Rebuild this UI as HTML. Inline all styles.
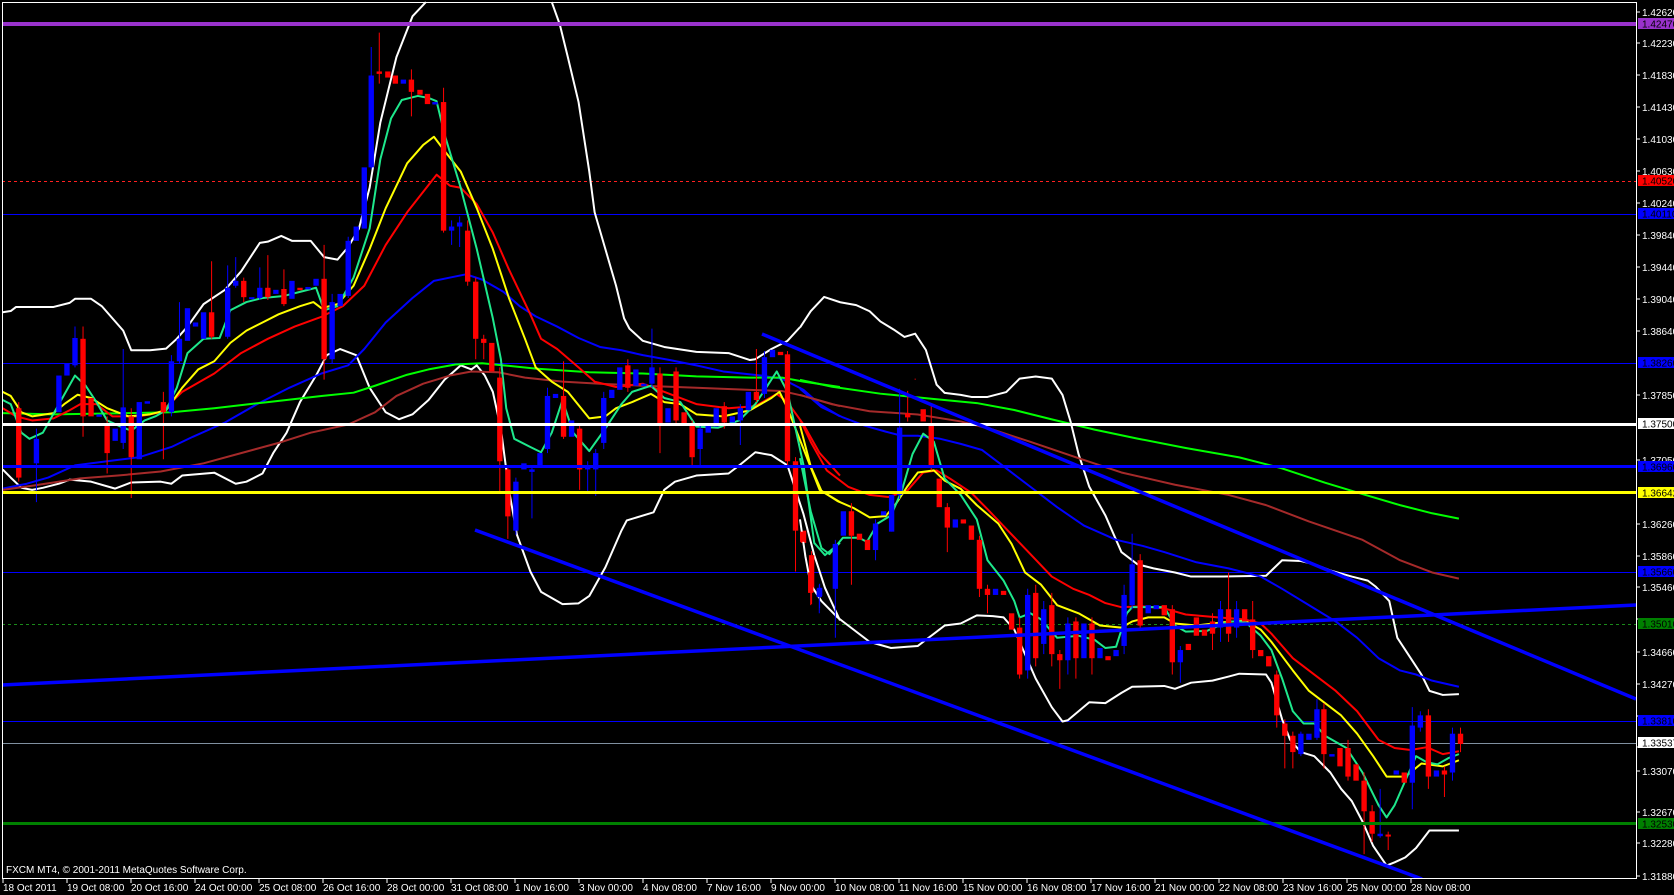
<!DOCTYPE html>
<html><head><meta charset="utf-8"><style>
html,body{margin:0;padding:0;background:#000;}
svg{display:block}
text{font-family:"Liberation Sans",sans-serif;font-size:10px;}
</style></head><body>
<svg width="1674" height="895" viewBox="0 0 1674 895" xmlns="http://www.w3.org/2000/svg">
<rect width="1674" height="895" fill="#000"/>
<line x1="2" y1="181.5" x2="1636" y2="181.5" stroke="#ff2020" stroke-dasharray="3,3"/>
<line x1="2" y1="214.5" x2="1636" y2="214.5" stroke="#0000ff"/>
<line x1="2" y1="363.5" x2="1636" y2="363.5" stroke="#0000ff"/>
<line x1="2" y1="572.5" x2="1636" y2="572.5" stroke="#0000ff"/>
<line x1="2" y1="624.5" x2="1636" y2="624.5" stroke="#1a8a1a" stroke-dasharray="3,3"/>
<line x1="2" y1="721.5" x2="1636" y2="721.5" stroke="#0000ff"/>
<line x1="2" y1="743.5" x2="1636" y2="743.5" stroke="#8090a0"/>

<g fill="none" stroke-linejoin="round">
<g transform="scale(0.5357,0.4082)">
<polyline vector-effect="non-scaling-stroke" stroke-width="2" stroke="#fff" points="5,765 20,762 30,752 100,752 130,742 140,732 170,732 190,750 230,810 245,858 280,858 310,854 330,830 350,800 380,745 420,710 450,665 485,595 500,592 525,578 545,590 580,590 605,630 630,636 650,605 670,560 690,460 710,300 740,140 770,40 795,5"/>
<polyline vector-effect="non-scaling-stroke" stroke-width="2" stroke="#fff" points="1030,5 1045,60 1060,140 1080,250 1100,420 1110,520 1130,610 1150,700 1165,780 1175,805 1200,835 1240,850 1300,862 1360,865 1400,882 1410,880 1440,855 1470,835 1493,802"/>
<polyline vector-effect="non-scaling-stroke" stroke-width="2" stroke="#fff" points="5,1150 20,1170 40,1195 60,1200 80,1195 110,1185 130,1175 170,1180 215,1197 245,1182 300,1180 320,1185 340,1165 400,1158 440,1185 460,1180 490,1160 510,1110 535,1060 560,985 590,920 610,870 635,855 665,870 690,950 720,1010 745,1027 770,1015 800,980 830,930 860,895 880,905 890,895 905,920 920,960 935,1050 950,1200 965,1310 990,1400 1010,1450 1050,1480 1080,1478 1100,1460 1130,1390 1160,1300 1170,1275 1220,1255 1240,1200 1260,1180 1300,1165 1360,1160 1380,1140 1410,1108 1440,1115 1470,1140 1480,1180 1500,1260 1520,1360 1540,1440 1568,1520"/>
<polyline vector-effect="non-scaling-stroke" stroke-width="2" stroke="#0000ff" points="5,1197 50,1185 90,1170 140,1140 200,1130 260,1120 320,1095 360,1070 420,1035 480,990 540,950 600,915 650,895 680,855 720,790 770,730 810,688 840,680 870,672 900,685 940,715 970,750 1000,775 1040,800 1080,828 1120,850 1160,858 1200,870 1250,882 1300,895 1350,910 1420,920 1460,928 1500,955 1530,990 1568,1020"/>
<polyline vector-effect="non-scaling-stroke" stroke-width="2" stroke="#00ff00" points="5,1012 100,1015 200,1013 320,1010 400,1000 500,985 600,970 660,962 700,945 760,918 800,905 850,893 900,890 940,895 1000,903 1100,912 1200,915 1300,922 1400,925 1460,925 1500,935 1568,948"/>
<polyline vector-effect="non-scaling-stroke" stroke-width="2" stroke="#a52a2a" points="5,1200 60,1190 150,1172 220,1165 300,1155 380,1135 450,1110 520,1085 580,1060 650,1040 700,1010 740,970 790,940 840,920 880,910 930,912 980,925 1050,935 1120,940 1200,945 1300,950 1400,955 1460,958 1500,970 1568,995"/>
<polyline vector-effect="non-scaling-stroke" stroke-width="2" stroke="#ff0000" points="5,1000 30,1020 60,1030 100,1025 130,1005 150,990 180,990 210,1020 260,1020 300,1010 340,960 400,915 450,865 500,830 550,800 600,776 640,750 680,700 720,600 760,520 815,428 840,455 860,460 890,500 920,570 950,660 990,770 1010,830 1040,855 1080,900 1110,935 1150,948 1200,940 1260,970 1300,990 1360,1000 1410,995 1450,965 1470,985 1500,1040 1530,1110 1568,1165"/>
<polyline vector-effect="non-scaling-stroke" stroke-width="2" stroke="#ffff00" points="5,960 20,970 40,1010 60,1020 100,1012 120,990 145,967 170,975 200,1000 240,1020 280,1015 310,1005 340,950 370,905 400,885 430,840 460,810 490,790 520,770 560,750 585,740 600,755 630,745 660,700 690,610 720,510 760,400 790,355 810,335 830,370 860,420 890,510 920,610 950,730 980,830 1000,900 1030,935 1060,960 1100,1025 1130,1020 1150,1000 1180,985 1215,965 1240,985 1270,990 1300,1015 1350,1020 1400,1005 1440,975 1455,960 1470,1000 1500,1100 1530,1200 1568,1230"/>
<polyline vector-effect="non-scaling-stroke" stroke-width="2" stroke="#1ee88c" points="5,980 20,990 40,1060 55,1075 80,1060 110,990 140,920 160,945 180,985 200,1030 225,1045 245,1055 270,1030 290,1020 310,1005 330,950 350,865 380,830 410,828 430,760 460,740 490,730 530,725 560,715 590,705 605,760 630,750 660,680 690,560 710,390 730,290 750,245 780,235 800,240 815,248 830,330 860,460 890,610 920,780 935,880 945,1000 960,1075 990,1095 1010,1108 1030,1060 1050,980 1070,1060 1100,1105 1130,1050 1160,990 1180,960 1215,945 1240,975 1270,985 1300,1045 1340,1048 1380,1030 1410,990 1440,930 1450,910 1470,960 1500,1140 1520,1330 1540,1360 1568,1330"/>
<path vector-effect="non-scaling-stroke" stroke="#ff0000" d="M35 985V1180M155 800V1070M200 1020V1160M245 1000V1220M305 960V1125M395 640V830M455 680V740M500 625V735M530 660V750M605 600V930M708 80V205M768 170V285M828 215V570M873 540V700M888 680V880M903 820V880M933 900V1210M948 1140V1320M1052 885V1075M1082 1040V1200M1172 880V960M1232 900V1110M1262 900V1040M1292 1030V1140M1352 985V1050M1412 855V985M1470 860V1140M1485 1120V1400M1515 1350V1480"/>
<path vector-effect="non-scaling-stroke" stroke="#0000ff" d="M68 1050V1230M140 800V900M230 855V1100M320 870V1020M335 740V890M425 650V830M440 630V705M485 655V735M620 720V890M650 580V730M693 115V415M843 540V600M858 530V605M963 1170V1310M993 1140V1270M1022 950V1110M1097 1130V1210M1112 1100V1215M1127 960V1100M1217 805V950M1307 1040V1140M1382 990V1090M1427 860V975M1530 1430V1490"/>
<g fill="#ff0000" stroke="none">
<rect x="30" y="1000" width="10" height="170"/><rect x="150" y="830" width="10" height="190"/><rect x="165" y="975" width="10" height="45"/><rect x="195" y="1040" width="10" height="70"/><rect x="240" y="1020" width="10" height="100"/><rect x="300" y="985" width="10" height="25"/><rect x="390" y="765" width="10" height="60"/><rect x="450" y="688" width="10" height="40"/><rect x="495" y="705" width="10" height="23"/><rect x="525" y="708" width="10" height="37"/><rect x="555" y="705" width="10" height="6"/><rect x="600" y="683" width="10" height="197"/><rect x="703" y="175" width="10" height="6"/><rect x="719" y="175" width="10" height="15"/><rect x="733" y="185" width="10" height="20"/><rect x="763" y="195" width="10" height="30"/><rect x="779" y="220" width="10" height="12"/><rect x="793" y="230" width="10" height="25"/><rect x="823" y="250" width="10" height="315"/><rect x="868" y="565" width="10" height="125"/><rect x="883" y="690" width="10" height="140"/><rect x="898" y="830" width="10" height="10"/><rect x="913" y="840" width="10" height="70"/><rect x="928" y="925" width="10" height="205"/><rect x="943" y="1150" width="10" height="115"/><rect x="1047" y="970" width="10" height="100"/><rect x="1077" y="1050" width="10" height="100"/><rect x="1167" y="895" width="10" height="55"/><rect x="1227" y="915" width="10" height="125"/><rect x="1257" y="910" width="10" height="120"/><rect x="1272" y="1010" width="10" height="30"/><rect x="1287" y="1040" width="10" height="80"/><rect x="1347" y="995" width="10" height="40"/><rect x="1407" y="960" width="10" height="20"/><rect x="1452" y="862" width="10" height="8"/><rect x="1465" y="868" width="10" height="262"/><rect x="1480" y="1130" width="10" height="170"/><rect x="1495" y="1300" width="10" height="30"/><rect x="1510" y="1360" width="10" height="90"/>
</g>
<g fill="#0000ff" stroke="none">
<rect x="63" y="1075" width="10" height="60"/><rect x="105" y="920" width="10" height="90"/><rect x="120" y="890" width="10" height="30"/><rect x="135" y="828" width="10" height="67"/><rect x="180" y="1015" width="10" height="6"/><rect x="210" y="1050" width="10" height="30"/><rect x="225" y="998" width="10" height="87"/><rect x="255" y="985" width="10" height="140"/><rect x="270" y="983" width="10" height="6"/><rect x="315" y="885" width="10" height="125"/><rect x="330" y="830" width="10" height="55"/><rect x="345" y="755" width="10" height="80"/><rect x="360" y="790" width="10" height="10"/><rect x="375" y="765" width="10" height="65"/><rect x="420" y="705" width="10" height="120"/><rect x="435" y="688" width="10" height="12"/><rect x="465" y="728" width="10" height="5"/><rect x="480" y="705" width="10" height="25"/><rect x="510" y="710" width="10" height="10"/><rect x="540" y="688" width="10" height="44"/><rect x="570" y="703" width="10" height="6"/><rect x="585" y="683" width="10" height="17"/><rect x="615" y="740" width="10" height="140"/><rect x="630" y="720" width="10" height="30"/><rect x="645" y="590" width="10" height="135"/><rect x="660" y="555" width="10" height="35"/><rect x="675" y="410" width="10" height="150"/><rect x="688" y="185" width="10" height="225"/><rect x="748" y="195" width="10" height="10"/><rect x="807" y="250" width="10" height="6"/><rect x="838" y="555" width="10" height="10"/><rect x="853" y="545" width="10" height="10"/><rect x="958" y="1180" width="10" height="120"/><rect x="973" y="1135" width="10" height="15"/><rect x="988" y="1150" width="10" height="6"/><rect x="1003" y="1110" width="10" height="30"/><rect x="1017" y="970" width="10" height="130"/><rect x="1032" y="965" width="10" height="10"/><rect x="1062" y="1030" width="10" height="40"/><rect x="1092" y="1140" width="10" height="10"/><rect x="1107" y="1110" width="10" height="40"/><rect x="1122" y="975" width="10" height="110"/><rect x="1137" y="955" width="10" height="20"/><rect x="1152" y="900" width="10" height="55"/><rect x="1182" y="905" width="10" height="40"/><rect x="1197" y="940" width="10" height="6"/><rect x="1212" y="900" width="10" height="40"/><rect x="1242" y="1000" width="10" height="35"/><rect x="1302" y="1050" width="10" height="50"/><rect x="1317" y="1040" width="10" height="20"/><rect x="1332" y="1000" width="10" height="45"/><rect x="1362" y="1020" width="10" height="15"/><rect x="1377" y="1000" width="10" height="30"/><rect x="1392" y="960" width="10" height="45"/><rect x="1422" y="875" width="10" height="90"/><rect x="1437" y="857" width="10" height="18"/><rect x="1525" y="1440" width="10" height="20"/>
</g>
</g>
<g transform="translate(800,250) scale(0.5357,0.4082)">
<polyline vector-effect="non-scaling-stroke" stroke-width="2" stroke="#fff" points="0,190 20,150 45,115 75,128 105,135 130,150 150,175 175,195 195,213 215,205 235,245 255,330 270,350 300,355 320,360 350,360 385,348 410,315 440,310 470,315 490,355 505,420 520,500 540,580 570,650 600,740 630,770 660,780 700,790 730,800 790,800 870,798 900,760 935,762 960,770 990,785 1030,800 1060,810 1075,825 1100,860 1115,950 1140,1000 1160,1040 1175,1080 1200,1090 1230,1088"/>
<polyline vector-effect="non-scaling-stroke" stroke-width="2" stroke="#fff" points="0,660 10,750 20,820 40,860 70,900 100,930 130,960 170,975 200,972 220,970 245,945 270,920 300,915 330,895 360,897 380,900 400,930 420,990 440,1050 470,1120 490,1155 500,1152 520,1130 540,1108 570,1110 600,1085 620,1070 680,1068 700,1075 730,1060 770,1055 800,1045 820,1038 870,1040 880,1060 900,1150 915,1200 935,1230 960,1240 990,1280 1010,1320 1030,1350 1050,1400 1070,1460 1095,1508 1110,1500 1130,1488 1150,1465 1175,1422 1230,1422"/>
<polyline vector-effect="non-scaling-stroke" stroke-width="2" stroke="#0000ff" points="0,340 40,385 80,410 120,430 160,445 190,455 220,455 260,462 300,475 340,490 380,530 430,580 480,630 530,675 590,710 640,725 680,740 740,765 800,780 860,800 900,830 950,870 1000,910 1040,950 1080,1000 1120,1030 1150,1040 1180,1055 1230,1070"/>
<polyline vector-effect="non-scaling-stroke" stroke-width="2" stroke="#00ff00" points="0,318 60,335 150,352 250,365 330,375 400,392 470,415 550,440 630,462 720,485 820,508 900,535 980,570 1050,598 1120,625 1180,645 1230,658"/>
<polyline vector-effect="non-scaling-stroke" stroke-width="2" stroke="#a52a2a" points="0,355 60,378 130,395 220,403 300,420 360,440 430,470 520,510 600,545 700,575 800,600 870,625 950,665 1050,710 1120,760 1180,790 1230,805"/>
<polyline vector-effect="non-scaling-stroke" stroke-width="2" stroke="#ff0000" points="0,415 20,470 50,540 90,580 130,600 165,605 200,590 230,545 255,540 280,560 320,595 350,635 390,690 430,745 470,800 510,830 540,845 570,865 600,875 640,873 680,878 720,893 780,900 830,905 860,915 880,940 920,1000 960,1040 1000,1080 1040,1130 1080,1200 1110,1220 1140,1225 1170,1218 1200,1235 1230,1228"/>
<polyline vector-effect="non-scaling-stroke" stroke-width="2" stroke="#ffff00" points="0,430 20,530 40,590 70,615 100,632 130,655 160,652 180,620 200,580 220,545 250,540 270,565 300,585 330,625 370,670 395,720 420,790 450,820 480,870 520,890 560,920 600,925 620,910 650,900 680,900 700,915 740,920 790,912 830,908 860,930 880,960 920,1030 950,1080 980,1110 1010,1140 1040,1185 1070,1240 1095,1290 1130,1290 1160,1258 1200,1265 1230,1250"/>
<polyline vector-effect="non-scaling-stroke" stroke-width="2" stroke="#1ee88c" points="0,510 20,640 40,730 55,745 80,705 110,705 125,715 145,670 170,650 190,590 210,500 230,450 250,470 270,560 300,600 330,660 350,760 380,810 400,860 410,900 430,890 450,905 480,950 520,945 550,955 570,975 590,972 610,890 620,875 680,875 700,920 720,935 760,933 800,910 830,910 860,945 880,980 900,1050 920,1130 940,1160 960,1160 980,1190 1000,1205 1020,1220 1050,1280 1080,1360 1095,1390 1110,1360 1130,1300 1150,1240 1170,1255 1190,1260 1210,1245 1230,1235"/>
<path vector-effect="non-scaling-stroke" stroke="#ff0000" d="M20 780V870M96 620V820M201 345V420M215 315V318M245 380V540M275 620V740M335 700V850M350 820V890M410 900V1050M440 820V1020M470 840V1020M485 980V1075M515 900V1050M545 900V1040M635 745V930M695 870V1040M770 890V980M800 790V960M845 860V1000M890 1030V1170M905 1150V1270M920 1180V1270M978 1110V1270M1023 1200V1300M1053 1280V1480M1068 1360V1450M1098 1425V1470M1173 1125V1320M1203 1265V1340M1233 1170V1230"/>
<path vector-effect="non-scaling-stroke" stroke="#0000ff" d="M36 820V890M66 710V950M141 660V760M171 600V690M186 340V610M425 830V1050M455 860V990M500 900V1040M605 820V990M620 695V880M710 970V1060M785 860V960M815 860V950M935 1180V1240M965 1100V1200M1083 1320V1440M1143 1120V1370M1158 1130V1180M1218 1170V1300"/>
<g fill="#ff0000" stroke="none">
<rect x="0" y="690" width="10" height="25"/><rect x="15" y="790" width="10" height="50"/><rect x="91" y="640" width="10" height="60"/><rect x="106" y="695" width="10" height="15"/><rect x="121" y="710" width="10" height="25"/><rect x="196" y="400" width="10" height="10"/><rect x="225" y="390" width="10" height="30"/><rect x="240" y="430" width="10" height="100"/><rect x="255" y="560" width="10" height="70"/><rect x="270" y="630" width="10" height="50"/><rect x="300" y="660" width="10" height="10"/><rect x="315" y="675" width="10" height="35"/><rect x="330" y="710" width="10" height="120"/><rect x="345" y="830" width="10" height="15"/><rect x="375" y="835" width="10" height="10"/><rect x="390" y="890" width="10" height="40"/><rect x="405" y="925" width="10" height="115"/><rect x="435" y="840" width="10" height="160"/><rect x="465" y="870" width="10" height="120"/><rect x="480" y="990" width="10" height="15"/><rect x="510" y="910" width="10" height="90"/><rect x="540" y="915" width="10" height="85"/><rect x="570" y="995" width="10" height="10"/><rect x="630" y="760" width="10" height="160"/><rect x="675" y="870" width="10" height="25"/><rect x="690" y="880" width="10" height="130"/><rect x="720" y="965" width="10" height="15"/><rect x="735" y="900" width="10" height="45"/><rect x="750" y="930" width="10" height="15"/><rect x="765" y="910" width="10" height="30"/><rect x="795" y="880" width="10" height="60"/><rect x="825" y="880" width="10" height="30"/><rect x="840" y="905" width="10" height="75"/><rect x="855" y="980" width="10" height="15"/><rect x="870" y="995" width="10" height="25"/><rect x="885" y="1040" width="10" height="100"/><rect x="900" y="1160" width="10" height="30"/><rect x="915" y="1190" width="10" height="40"/><rect x="973" y="1125" width="10" height="110"/><rect x="1003" y="1220" width="10" height="45"/><rect x="1018" y="1220" width="10" height="70"/><rect x="1033" y="1260" width="10" height="40"/><rect x="1048" y="1300" width="10" height="75"/><rect x="1063" y="1375" width="10" height="55"/><rect x="1093" y="1432" width="10" height="5"/><rect x="1123" y="1280" width="10" height="25"/><rect x="1168" y="1140" width="10" height="150"/><rect x="1198" y="1275" width="10" height="10"/><rect x="1228" y="1185" width="10" height="25"/>
</g>
<g fill="#0000ff" stroke="none">
<rect x="31" y="830" width="10" height="20"/><rect x="61" y="720" width="10" height="110"/><rect x="76" y="640" width="10" height="60"/><rect x="136" y="670" width="10" height="65"/><rect x="151" y="640" width="10" height="10"/><rect x="166" y="600" width="10" height="90"/><rect x="181" y="435" width="10" height="165"/><rect x="285" y="660" width="10" height="20"/><rect x="360" y="830" width="10" height="15"/><rect x="420" y="845" width="10" height="185"/><rect x="450" y="880" width="10" height="85"/><rect x="495" y="915" width="10" height="90"/><rect x="525" y="915" width="10" height="85"/><rect x="555" y="975" width="10" height="25"/><rect x="585" y="980" width="10" height="15"/><rect x="600" y="845" width="10" height="125"/><rect x="615" y="770" width="10" height="100"/><rect x="645" y="870" width="10" height="20"/><rect x="660" y="870" width="10" height="10"/><rect x="705" y="980" width="10" height="30"/><rect x="780" y="880" width="10" height="45"/><rect x="810" y="880" width="10" height="45"/><rect x="930" y="1185" width="10" height="50"/><rect x="945" y="1185" width="10" height="15"/><rect x="960" y="1125" width="10" height="70"/><rect x="988" y="1235" width="10" height="6"/><rect x="1078" y="1430" width="10" height="6"/><rect x="1108" y="1275" width="10" height="10"/><rect x="1138" y="1165" width="10" height="140"/><rect x="1153" y="1140" width="10" height="30"/><rect x="1183" y="1275" width="10" height="15"/><rect x="1213" y="1185" width="10" height="95"/>
</g>
</g>
</g>

<rect x="2" y="22" width="1634" height="4" fill="#9932cc"/>
<rect x="2" y="423" width="1634" height="3" fill="#ffffff"/>
<rect x="2" y="465" width="1634" height="3" fill="#0000ff"/>
<rect x="2" y="491" width="1634" height="3" fill="#ffff00"/>
<rect x="2" y="822" width="1634" height="3" fill="#008000"/>
<line x1="762" y1="334" x2="1636" y2="699" stroke="#0000ff" stroke-width="3.5"/>
<line x1="475" y1="530" x2="1422" y2="879" stroke="#0000ff" stroke-width="3.5"/>
<line x1="2" y1="685" x2="1636" y2="605" stroke="#0000ff" stroke-width="3.5"/>

<rect x="0" y="879" width="1674" height="16" fill="#000"/>
<rect x="1637" y="0" width="37" height="895" fill="#000"/>
<rect x="0" y="0" width="2" height="895" fill="#000"/>
<polyline points="2.5,879 2.5,2.5 1636.5,2.5 1636.5,878.5 2,878.5" fill="none" stroke="#fff"/>

<g stroke="#fff">
<path d="M1636 12h4M1636 43h4M1636 75h4M1636 107h4M1636 139h4M1636 171h4M1636 203h4M1636 235h4M1636 267h4M1636 299h4M1636 331h4M1636 395h4M1636 460h4M1636 524h4M1636 556h4M1636 587h4M1636 619h4M1636 652h4M1636 684h4M1636 716h4M1636 747h4M1636 771h4M1636 812h4M1636 843h4M1636 876h4"/>
</g>
<g fill="#fff">
<text x="1642" y="16">1.42620</text><text x="1642" y="47">1.42230</text><text x="1642" y="79">1.41830</text><text x="1642" y="111">1.41430</text><text x="1642" y="143">1.41030</text><text x="1642" y="175">1.40630</text><text x="1642" y="207">1.40240</text><text x="1642" y="239">1.39840</text><text x="1642" y="271">1.39440</text><text x="1642" y="303">1.39040</text><text x="1642" y="335">1.38640</text><text x="1642" y="399">1.37850</text><text x="1642" y="464">1.37050</text><text x="1642" y="528">1.36260</text><text x="1642" y="560">1.35860</text><text x="1642" y="591">1.35460</text><text x="1642" y="656">1.34660</text><text x="1642" y="688">1.34270</text><text x="1642" y="775">1.33070</text><text x="1642" y="816">1.32670</text><text x="1642" y="847">1.32280</text><text x="1642" y="880">1.31880</text>
</g>
<g>
<rect x="1638" y="18" width="36" height="11" fill="#9932cc"/><text x="1642" y="27.5" fill="#000">1.42470</text>
<rect x="1638" y="175" width="36" height="11" fill="#ff0000"/><text x="1642" y="184.5" fill="#000">1.40520</text>
<rect x="1638" y="208" width="36" height="11" fill="#0000ff"/><text x="1642" y="217.5" fill="#000">1.40110</text>
<rect x="1638" y="357" width="36" height="11" fill="#0000ff"/><text x="1642" y="366.5" fill="#000">1.38260</text>
<rect x="1638" y="418" width="36" height="11" fill="#ffffff"/><text x="1642" y="427.5" fill="#000">1.37500</text>
<rect x="1638" y="461" width="36" height="11" fill="#0000ff"/><text x="1642" y="470.5" fill="#000">1.36960</text>
<rect x="1638" y="487" width="36" height="11" fill="#ffff00"/><text x="1642" y="496.5" fill="#000">1.36642</text>
<rect x="1638" y="566" width="36" height="11" fill="#0000ff"/><text x="1642" y="575.5" fill="#000">1.35660</text>
<rect x="1638" y="618" width="36" height="11" fill="#008000"/><text x="1642" y="627.5" fill="#000">1.35010</text>
<rect x="1638" y="715" width="36" height="11" fill="#0000ff"/><text x="1642" y="724.5" fill="#000">1.33810</text>
<rect x="1638" y="737" width="36" height="11" fill="#ffffff"/><text x="1642" y="746.5" fill="#000">1.33537</text>
<rect x="1638" y="818" width="36" height="11" fill="#008000"/><text x="1642" y="827.5" fill="#000">1.32530</text>
</g>

<path stroke="#fff" d="M3 879v4M67 879v4M131 879v4M195 879v4M259 879v4M323 879v4M387 879v4M451 879v4M515 879v4M579 879v4M643 879v4M707 879v4M771 879v4M835 879v4M899 879v4M963 879v4M1027 879v4M1091 879v4M1155 879v4M1219 879v4M1283 879v4M1347 879v4M1411 879v4"/>
<g fill="#fff">
<text x="3" y="891">18 Oct 2011</text><text x="67" y="891">19 Oct 08:00</text><text x="131" y="891">20 Oct 16:00</text><text x="195" y="891">24 Oct 00:00</text><text x="259" y="891">25 Oct 08:00</text><text x="323" y="891">26 Oct 16:00</text><text x="387" y="891">28 Oct 00:00</text><text x="451" y="891">31 Oct 08:00</text><text x="515" y="891">1 Nov 16:00</text><text x="579" y="891">3 Nov 00:00</text><text x="643" y="891">4 Nov 08:00</text><text x="707" y="891">7 Nov 16:00</text><text x="771" y="891">9 Nov 00:00</text><text x="835" y="891">10 Nov 08:00</text><text x="899" y="891">11 Nov 16:00</text><text x="963" y="891">15 Nov 00:00</text><text x="1027" y="891">16 Nov 08:00</text><text x="1091" y="891">17 Nov 16:00</text><text x="1155" y="891">21 Nov 00:00</text><text x="1219" y="891">22 Nov 08:00</text><text x="1283" y="891">23 Nov 16:00</text><text x="1347" y="891">25 Nov 00:00</text><text x="1411" y="891">28 Nov 08:00</text>
<text x="6" y="873">FXCM MT4, © 2001-2011 MetaQuotes Software Corp.</text>
</g>
</svg>
</body></html>
